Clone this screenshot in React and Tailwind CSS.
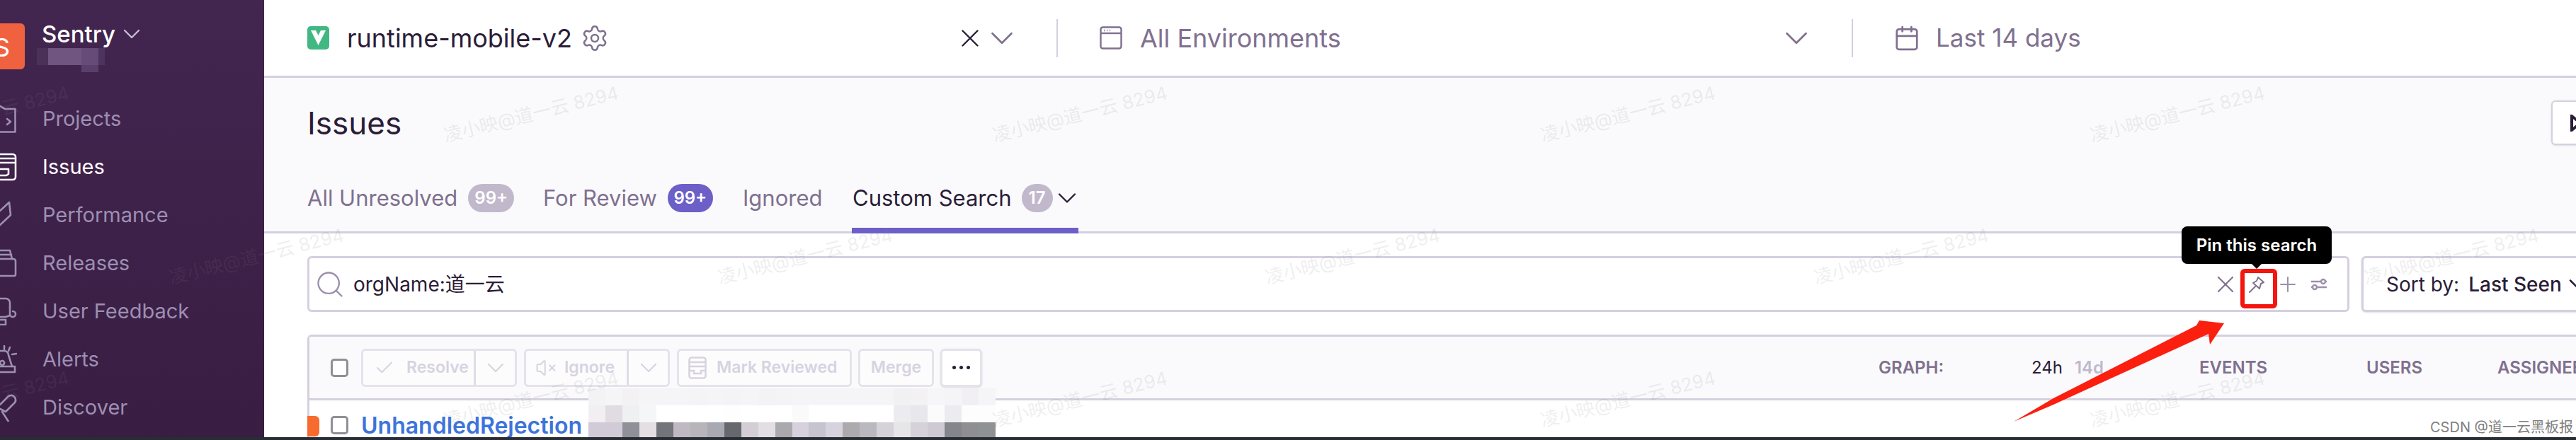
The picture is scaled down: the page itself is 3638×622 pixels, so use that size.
import { Calendar, Check, ChevronDown, Plus, Search, Settings, VolumeX, X } from "lucide-react";

const navItems = [
  { label: "Projects", paths: ["M0 2 L7 6 H21.5 V38.5 H0", "M10 20 L15 24 L10 28"] },
  { label: "Issues", active: true, paths: ["M0 2H18a4 4 0 0 1 4 4V34a4 4 0 0 1-4 4H0", "M0 8H20", "M0 14H20", "M0 23H12V30L9 32H0"] },
  { label: "Performance", paths: ["M0 14 L13 2 L15 20 L0 34"] },
  { label: "Releases", paths: ["M0 2H14L17 14", "M0 8H16", "M0 14H19a3 3 0 0 1 3 3V36a2 2 0 0 1-2 2H0"] },
  { label: "User Feedback", paths: ["M0 2H8a6 6 0 0 1 6 6V14", "M14 14V24a4 4 0 1 0 4-4", "M14 26L8 28H0", "M0 32H8V39H0"] },
  { label: "Alerts", paths: ["M0 8H6a6 6 0 0 1 6 6L17 30", "M0 30H21V38H0", "M6 1V6", "M14 3L12 8", "M17 13L23 12", "M3 22a3 3 0 1 0 .1 0"] },
  { label: "Discover", paths: ["M0 16L12 4q6-3 9 2q3 5-2 9L8 26L0 22", "M3 26L12 40"] },
];

const tabs = [
  { label: "All Unresolved", badge: "99+", badgeClass: "bg-[#c1b8cc] w-[65px]", marginClass: "w-[333px]" },
  { label: "For Review", badge: "99+", badgeClass: "bg-[#6c5fc7] w-[64px]", marginClass: "w-[282px]" },
  { label: "Ignored", marginClass: "w-[155px]" },
];

const sidebarBlur = [
  { left: 0, top: 10, w: 16, h: 24, c: "#4b3058" },
  { left: 16, top: 10, w: 47, h: 24, c: "#6f5580" },
  { left: 63, top: 10, w: 24, h: 24, c: "#664a78" },
  { left: 87, top: 10, w: 9, h: 24, c: "#4d3360" },
  { left: 63, top: 34, w: 24, h: 10, c: "#5a3f6c" },
];

const blurRows = [
  ["#f3f3f6", "#f5f5f7", "#f4f1f4", "#f5f5f8", "#f5f5f8", "#f5f5f8", "#f4f4f7", "#f5f5f8", "#f4f4f7", "#f5f5f8", "#f3f3f6", "#f4f4f7", "#f5f5f8", "#f5f5f8", "#f5f5f8", "#f5f5f8", "#f5f5f8", "#f5f5f8", "#f1f0f3", "#f3f1f4", "#f6f6f8", "#f5f5f8", "#f1eff3", "#f5f5f8"],
  ["#f2eff2", "#e0dce2", "#eff0f2", "#f5f6f8", "#ffffff", "#ffffff", "#ffffff", "#ffffff", "#fefefe", "#ffffff", "#ffffff", "#ffffff", "#fafafa", "#ffffff", "#ffffff", "#ffffff", "#ffffff", "#ffffff", "#ecebf0", "#e8e7ec", "#fbfbfb", "#ecebef", "#fdfdfd", "#fdfdfd"],
  ["#d1cbd7", "#d1cbd7", "#8f9199", "#e4dfe3", "#73757b", "#c0b9c4", "#b8b5ba", "#a8a9b2", "#66686d", "#d3ced6", "#e2dee4", "#a9a9ae", "#d6d1dc", "#c5c4cf", "#d6d3df", "#adaaae", "#bbb9c0", "#d6d2d9", "#e6e6e8", "#d6d2da", "#cfc9d4", "#84868b", "#8f8f93", "#8f9294"],
];

// watermark centres, the tile repeats every 775px and 201px
const watermarks = [
  [362, -40], [1137, -40], [1910, -40], [2685, -40], [3462, -40],
  [-26, 161], [750, 161], [1525, 161], [2299, 161], [3075, 161],
  [362, 362], [1137, 362], [1910, 362], [2685, 362], [3462, 362],
  [-26, 564], [750, 564], [1525, 564], [2299, 564], [3075, 564],
];

function NavIcon({ paths, active }) {
  return (
    <svg
      width="24"
      height="40"
      viewBox="0 0 24 40"
      fill="none"
      stroke={active ? "#ffffff" : "#9d8fb3"}
      strokeWidth="2.6"
      strokeLinecap="round"
      strokeLinejoin="round"
      className="shrink-0"
    >
      {paths.map((d) => (
        <path key={d} d={d} />
      ))}
    </svg>
  );
}

function Sidebar() {
  return (
    <aside className="w-[373px] shrink-0 bg-gradient-to-b from-[#432650] to-[#391d42] pt-[33px] overflow-hidden">
      <div className="flex h-[65px] gap-[24px]">
        <div className="w-[35px] h-[65px] shrink-0 bg-[#f0623f] rounded-r-[6px] overflow-hidden flex items-center justify-end pr-[21px] text-white text-[36px] leading-none pt-[3px]">
          S
        </div>
        <div className="relative">
          <div className="flex items-center h-[30px] text-white text-[33px] font-medium leading-none">
            Sentry
            <ChevronDown size={40} strokeWidth={1.4} className="ml-[3px] text-[#c9bfd6]" />
          </div>
          <div className="absolute left-[-7px] top-[25px] w-[96px] h-[44px]">
            {sidebarBlur.map((b) => (
              <div
                key={b.left + "-" + b.top}
                className="absolute"
                style={{ left: b.left, top: b.top, width: b.w, height: b.h, background: b.c }}
              />
            ))}
          </div>
        </div>
      </div>
      <nav className="mt-[36px]">
        {navItems.map((item) => (
          <div
            key={item.label}
            className={
              "flex items-center gap-[36px] h-[68px] text-[29px] " +
              (item.active ? "text-white" : "text-[#9d8fb3]")
            }
          >
            <NavIcon paths={item.paths} active={item.active} />
            {item.label}
          </div>
        ))}
      </nav>
    </aside>
  );
}

function TopBar() {
  return (
    <header className="h-[110px] bg-white border-b-[3px] border-[#d5cfe0] flex items-center shadow-[0_3px_6px_rgba(60,40,90,0.06)] relative">
      <div className="w-[1121px] h-[54px] shrink-0 pl-[61px] pr-[50px] flex items-center border-r-2 border-[#d5cfe0]">
        <svg width="31" height="33" viewBox="0 0 31 33" className="shrink-0">
          <rect width="31" height="33" rx="5" fill="#41b883" />
          <path d="M5 6H26L15.5 27Z" fill="#ffffff" />
          <path d="M12 6H19L15.5 13Z" fill="#41b883" />
        </svg>
        <span className="ml-[25px] text-[36px] text-[#2b1d38] whitespace-nowrap">runtime-mobile-v2</span>
        <Settings size={40} strokeWidth={1.5} className="ml-[12px] text-[#80708f] shrink-0" />
        <X size={42} strokeWidth={1.4} className="ml-auto text-[#2b1d38] shrink-0" />
        <ChevronDown size={54} strokeWidth={1.2} className="-ml-[3px] text-[#80708f] shrink-0" />
      </div>
      <div className="w-[1123px] h-[54px] shrink-0 pl-[59px] pr-[51px] flex items-center border-r-2 border-[#d5cfe0] text-[#80708f]">
        <svg width="32" height="33" viewBox="0 0 32 33" fill="none" stroke="#80708f" strokeWidth="2.4" className="shrink-0">
          <rect x="1.5" y="1.5" width="29" height="30" rx="3" />
          <path d="M1.5 10H30.5" />
          <path d="M6 6H7M10 6H11M14 6H15" />
        </svg>
        <span className="ml-[25px] text-[36px] whitespace-nowrap">All Environments</span>
        <ChevronDown size={54} strokeWidth={1.2} className="ml-auto shrink-0" />
      </div>
      <div className="pl-[57px] flex items-center text-[#80708f]">
        <Calendar size={38} strokeWidth={1.7} />
        <span className="ml-[22px] text-[35px] whitespace-nowrap">Last 14 days</span>
      </div>
    </header>
  );
}

function PageHeader() {
  return (
    <div className="bg-[#fafafc] border-b-[3px] border-[#d5cfe0] h-[220px] pl-[61px] pt-[32px] relative">
      <div className="flex items-center h-[63px]">
        <h1 className="w-[3169px] shrink-0 text-[44px] text-[#2b1d38] font-normal">Issues</h1>
        <div className="w-[60px] h-[63px] shrink-0 bg-white border-2 border-[#d5cfe0] rounded-l-[6px] shadow-sm pl-[25px] flex items-center">
          <svg width="12" height="24" viewBox="0 0 12 24" fill="none" stroke="#2b1d38" strokeWidth="4">
            <path d="M2 2L14 12L2 22Z" />
          </svg>
        </div>
      </div>
      <div className="flex items-center mt-[45px] h-[60px] text-[31px] text-[#80708f]">
        {tabs.map((t) => (
          <div key={t.label} className={"flex items-center shrink-0 gap-[15px] whitespace-nowrap " + t.marginClass}>
            {t.label}
            {t.badge && (
              <span className={"h-[40px] rounded-[20px] flex items-center justify-center text-white text-[24px] font-semibold " + t.badgeClass}>
                {t.badge}
              </span>
            )}
          </div>
        ))}
        <div className="flex items-center shrink-0 text-[#2b1d38] whitespace-nowrap">
          Custom Search
          <span className="ml-[14px] w-[44px] h-[40px] rounded-[20px] bg-[#c1b8cc] text-white text-[24px] font-semibold flex items-center justify-center">
            17
          </span>
          <ChevronDown size={44} strokeWidth={1.3} className="-ml-[2px]" />
        </div>
      </div>
      <div className="absolute left-[830px] bottom-[-3px] w-[320px] h-[8px] bg-[#6c5fc7]" />
    </div>
  );
}

function SearchRow() {
  return (
    <div className="flex gap-[17px] pl-[61px] pt-[32px]">
      <div className="relative w-[2884px] h-[79px] shrink-0 border-[3px] border-[#d5cfe0] rounded-[6px] bg-white flex items-center pl-[7px] pr-[28px]">
        <Search size={44} strokeWidth={1.3} className="text-[#9c90ac] shrink-0" />
        <span className="ml-[11px] text-[28px] text-[#2b1d38]">orgName:道一云</span>
        <X size={40} strokeWidth={1.3} className="ml-auto text-[#80708f] shrink-0" />
        <svg width="24" height="24" viewBox="0 0 24 24" fill="none" stroke="#80708f" strokeWidth="2" strokeLinejoin="round" strokeLinecap="round" className="ml-[12px] shrink-0">
          <path d="M14 2L22 9L18 11L16 18L7 10L12 7Z" />
          <path d="M11 14L2 23" />
        </svg>
        <Plus size={34} strokeWidth={1.4} className="ml-[15px] text-[#9c90ac] shrink-0" />
        <svg width="24" height="18" viewBox="0 0 24 18" fill="none" stroke="#9c90ac" strokeWidth="2.4" className="ml-[15px] shrink-0">
          <path d="M1 5H15M21 5H23M1 13H3M9 13H23" />
          <circle cx="18" cy="5" r="3" />
          <circle cx="6" cy="13" r="3" />
        </svg>
        <div className="absolute left-[2727px] top-[15px] w-[52px] h-[56px] border-[6px] border-[#f5150f] rounded-[6px]" />
        <div className="absolute left-[2644px] top-[-45px] w-[212px] h-[53px] bg-black rounded-[8px] text-white text-[24px] font-semibold flex items-center justify-center">
          Pin this search
          <div className="absolute left-[98px] bottom-[-7px] w-0 h-0 border-l-[8px] border-r-[8px] border-t-[8px] border-l-transparent border-r-transparent border-t-black" />
        </div>
      </div>
      <div className="w-[400px] h-[79px] shrink-0 border-[3px] border-[#d5cfe0] rounded-[6px] bg-white flex items-center pl-[32px] text-[28px] text-[#2b1d38] shadow-sm whitespace-nowrap">
        <span>Sort by:</span>
        <span className="ml-[13px] font-medium">Last Seen</span>
        <ChevronDown size={44} strokeWidth={1.4} className="ml-[1px] shrink-0" />
      </div>
    </div>
  );
}

function ActionBtn({ className, children }) {
  return (
    <div
      className={
        "h-[54px] shrink-0 border-[3px] border-[#e6e2ec] rounded-[6px] flex items-center bg-[#fcfcfd] text-[#d8d3e0] text-[23px] font-semibold " +
        className
      }
    >
      {children}
    </div>
  );
}

function IssueTable() {
  return (
    <div className="relative mt-[32px] ml-[61px] w-[3300px] h-[200px] border-l-[3px] border-t-[3px] border-[#d5cfe0] rounded-tl-[6px] bg-white">
      <div className="h-[90px] bg-[#fafafc] border-b-[3px] border-[#d5cfe0] flex items-center pl-[30px]">
        <div className="w-[25px] h-[26px] shrink-0 border-[3px] border-[#8f8f95] rounded-[5px] bg-white" />
        <div className="ml-[18px] flex">
          <ActionBtn className="w-[220px]">
            <Check size={30} strokeWidth={1.6} className="ml-[15px]" />
            <span className="ml-[16px]">Resolve</span>
            <div className="ml-auto w-[58px] h-full border-l-[3px] border-[#e0dbe6] flex items-center justify-center">
              <ChevronDown size={40} strokeWidth={1.3} className="shrink-0" />
            </div>
          </ActionBtn>
          <ActionBtn className="w-[206px] ml-[10px]">
            <VolumeX size={30} strokeWidth={1.6} className="ml-[13px]" />
            <span className="ml-[11px]">Ignore</span>
            <div className="ml-auto w-[58px] h-full border-l-[3px] border-[#e0dbe6] flex items-center justify-center">
              <ChevronDown size={40} strokeWidth={1.3} className="shrink-0" />
            </div>
          </ActionBtn>
          <ActionBtn className="w-[247px] ml-[10px]">
            <svg width="26" height="32" viewBox="0 0 26 32" fill="none" stroke="#d8d3e0" strokeWidth="2.6" className="ml-[13px] shrink-0">
              <rect x="1.5" y="1.5" width="23" height="29" rx="3" />
              <path d="M1.5 8H24.5M1.5 14H24.5M1.5 20H8V24H18V20H24.5" />
            </svg>
            <span className="ml-[14px]">Mark Reviewed</span>
          </ActionBtn>
          <ActionBtn className="w-[107px] ml-[9px] justify-center">Merge</ActionBtn>
          <ActionBtn className="w-[59px] ml-[9px] justify-center gap-[5px] bg-white border-[#d5cfe0] shadow-sm">
            <span className="w-[5px] h-[5px] rounded-full bg-[#2b1d38]" />
            <span className="w-[5px] h-[5px] rounded-full bg-[#2b1d38]" />
            <span className="w-[5px] h-[5px] rounded-full bg-[#2b1d38]" />
          </ActionBtn>
        </div>
        <div className="ml-[1266px] flex items-center text-[24px] font-semibold text-[#80708f] uppercase shrink-0">
          <span className="w-[216px]">Graph:</span>
          <span className="w-[237px] flex gap-[17px] normal-case text-[24px]">
            <span className="text-[#2b1d38] font-normal">24h</span>
            <span className="text-[#c1b8cc]">14d</span>
          </span>
          <span className="w-[236px]">Events</span>
          <span className="w-[185px]">Users</span>
          <span>Assignee</span>
        </div>
      </div>
      <div className="flex pt-[22px]">
        <div className="w-[17px] h-[29px] -ml-[3px] shrink-0 bg-[#f76b2e] rounded-r-[6px]" />
        <div className="ml-[16px] w-[25px] h-[26px] shrink-0 border-[3px] border-[#8f8f95] rounded-[5px]" />
        <span className="ml-[18px] text-[32px] leading-[28px] font-semibold text-[#3d74db]">UnhandledRejection</span>
      </div>
      <div className="absolute left-[394px] top-[73px] w-[575px] grid grid-cols-[repeat(24,1fr)] auto-rows-[24px]">
        {blurRows.flat().map((c, i) => (
          <div key={i} style={{ background: c }} />
        ))}
      </div>
    </div>
  );
}

export default function App() {
  return (
    <div className="relative w-[3638px] h-[622px] overflow-hidden bg-white flex flex-col font-[Inter,'Noto_Sans_CJK_SC',sans-serif]">
      <div className="h-[618px] flex overflow-hidden">
        <Sidebar />
        <main className="flex-1 min-w-0 overflow-hidden">
          <TopBar />
          <PageHeader />
          <SearchRow />
          <IssueTable />
        </main>
      </div>
      <div className="h-[4px] bg-[#282c33]" />

      {/* annotation arrow drawn over the shot */}
      <svg className="absolute left-[2840px] top-[450px]" width="310" height="150" viewBox="2840 450 310 150">
        <polygon
          points="2844,596 2900,563 3102,460 3106,453 3141,457 3121,487 3119,472 2900,572"
          fill="#fb1f10"
        />
      </svg>

      {watermarks.map(([x, y]) => (
        <span
          key={x + "-" + y}
          className="absolute -translate-x-1/2 -translate-y-1/2 -rotate-[14deg] whitespace-nowrap text-[26px] text-[#80808024] pointer-events-none"
          style={{ left: x, top: y }}
        >
          凌小映@道一云 8294
        </span>
      ))}

      <span className="absolute left-[3432px] top-[589px] text-[20px] text-[#7f7f7f] whitespace-nowrap">
        CSDN @道一云黑板报
      </span>
    </div>
  );
}
